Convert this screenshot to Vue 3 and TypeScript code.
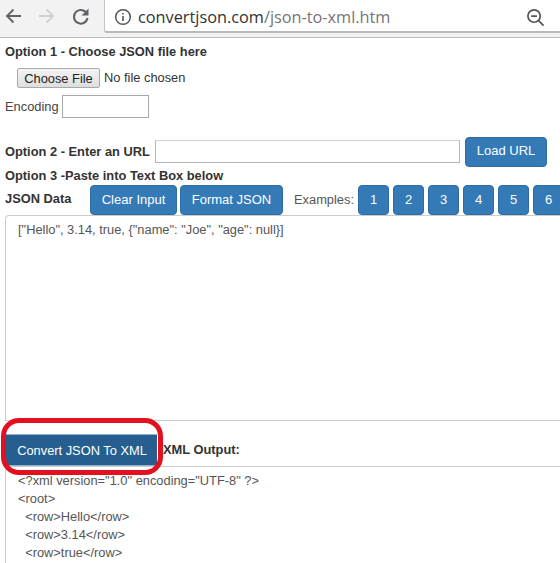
<script setup lang="ts">
const examples: number[] = [1, 2, 3, 4, 5, 6]
const jsonText = '["Hello", 3.14, true, {"name": "Joe", "age": null}]'
const xmlLines: string[] = [
  '<?xml version="1.0" encoding="UTF-8" ?>',
  '<root>',
  '  <row>Hello</row>',
  '  <row>3.14</row>',
  '  <row>true</row>',
]
</script>

<template>
  <div class="page">
    <header class="chrome">
      <div class="nav">
        <svg class="navicon" viewBox="0 0 20 20" width="20" height="20"><path d="M18 10H4M10.500 3.500L4 10l6.500 6.500" fill="none" stroke="#5f6368" stroke-width="1.800" /></svg>
        <svg class="navicon" viewBox="0 0 20 20" width="20" height="20"><path d="M2 10h14M9.500 3.500L16 10l-6.500 6.500" fill="none" stroke="#d0d0d0" stroke-width="1.800" /></svg>
        <svg class="navicon" viewBox="0 0 20 20" width="20" height="20"><path d="M16.200 8.500A6.800 6.800 0 1 0 16.500 12" fill="none" stroke="#5f6368" stroke-width="2" /><path d="M17.500 2.500v7h-7z" fill="#5f6368" /></svg>
      </div>
      <div class="omnibox">
        <svg class="info" viewBox="0 0 18 18" width="18" height="18"><circle cx="9" cy="9" r="7.300" fill="none" stroke="#555" stroke-width="1.500" /><path d="M9 8v5M9 5v1.600" stroke="#555" stroke-width="1.600" /></svg>
        <span class="url"><span class="host">convertjson.com</span>/json-to-xml.htm</span>
        <svg class="zoomout" viewBox="0 0 20 20" width="19" height="19"><circle cx="8.500" cy="8.500" r="6.500" fill="none" stroke="#555" stroke-width="1.800" /><path d="M5.500 8.500h6M13 13l5.500 5.500" stroke="#555" stroke-width="1.800" /></svg>
      </div>
    </header>

    <main class="content">
      <div class="opt1">Option 1 - Choose JSON file here</div>
      <div class="filerow">
        <button class="native">Choose File</button>
        <span class="nofile">No file chosen</span>
      </div>
      <div class="encrow">
        <label class="plain">Encoding</label>
        <input class="enc" type="text" />
      </div>
      <div class="urlrow">
        <span class="bold urllabel">Option 2 - Enter an URL</span>
        <input class="urlinput" type="text" />
        <button class="btn load">Load URL</button>
      </div>
      <div class="opt3">Option 3 -Paste into Text Box below</div>
      <div class="toolrow">
        <span class="bold jsonlabel">JSON Data</span>
        <button class="btn clear">Clear Input</button>
        <button class="btn format">Format JSON</button>
        <span class="exlabel">Examples:</span>
        <button v-for="n in examples" :key="n" class="btn num">{{ n }}</button>
      </div>
      <div class="textbox">{{ jsonText }}</div>
      <div class="convertrow">
        <button class="convert">Convert JSON To XML</button>
        <span class="bold outlabel">XML Output:</span>
        <span class="redmark"></span>
      </div>
      <pre class="output"><template v-for="line in xmlLines" :key="line">{{ line }}
</template></pre>
    </main>
  </div>
</template>

<style>
html, body { margin: 0; padding: 0; background: #fff; overflow: hidden; }
</style>

<style scoped>
.page {
  width: 560px;
  height: 563px;
  overflow: hidden;
  font-family: "Liberation Sans", Arial, sans-serif;
  font-size: 12.850px;
  color: #333;
  background: #fff;
}
.chrome {
  display: flex;
  height: 38px;
  box-sizing: border-box;
  background: #f2f2f2;
  border-bottom: 1px solid #bdbdbd;
  align-items: flex-start;
}
.nav {
  display: flex;
  width: 104px;
  padding: 6px 0 0 3px;
  box-sizing: border-box;
  gap: 14px;
}
.navicon { flex: none; }
.omnibox {
  flex: 1;
  display: flex;
  align-items: center;
  height: 33px;
  box-sizing: border-box;
  background: #fff;
  border-left: 1px solid #c4c4c4;
  border-bottom: 2px solid #b9b9b9;
  border-bottom-left-radius: 3px;
  padding: 3px 0 0 9px;
}
.info { flex: none; }
.url {
  margin-left: 6px;
  font-family: "Open Sans", sans-serif;
  font-size: 16.300px;
  color: #757575;
  white-space: nowrap;
}
.host { color: #333; }
.zoomout { margin-left: auto; margin-right: 15px; flex: none; }

.content { position: relative; height: 525px; }
.bold { font-weight: bold; white-space: nowrap; }
.opt1 { font-weight: bold; padding: 6px 0 0 5px; line-height: 16px; height: 24px; }
.filerow { display: flex; align-items: center; padding-left: 17px; height: 20px; }
.native {
  width: 83px;
  height: 20px;
  flex: none;
  padding: 0;
  font: 12.850px "Liberation Sans", Arial, sans-serif;
  color: #222;
  background: linear-gradient(#f4f4f4, #dedede);
  border: 1px solid #a9a9a9;
  border-radius: 2px;
}
.nofile { margin-left: 4px; color: #333; position: relative; top: -1px; }
.encrow { display: flex; align-items: center; padding: 7px 0 0 5px; height: 22px; }
.plain { color: #444; width: 54px; flex: none; }
.enc {
  margin-left: 3px;
  width: 87px;
  height: 23px;
  flex: none;
  box-sizing: border-box;
  border: 1px solid #a9a9a9;
  padding: 0;
}
.urlrow { display: flex; align-items: center; padding: 20px 0 0 5px; height: 29px; }
.urllabel { width: 150px; flex: none; }
.urlinput {
  width: 305px;
  height: 23px;
  flex: none;
  box-sizing: border-box;
  border: 1px solid #b5b5b5;
  border-top-color: #d0d0d0;
  padding: 0;
}
.btn {
  height: 30px;
  flex: none;
  box-sizing: border-box;
  padding: 0 0 2px;
  color: #fff;
  font: 13px "Liberation Sans", Arial, sans-serif;
  background: #337ab7;
  border: 1px solid #2e6da4;
  border-radius: 4px;
}
.load { width: 82px; margin-left: 5px; }
.opt3 { font-weight: bold; padding: 1px 0 0 5px; line-height: 18px; height: 18px; }
.toolrow { display: flex; align-items: center; padding-left: 5px; height: 30px; width: 600px; white-space: nowrap; }
.jsonlabel { width: 85px; flex: none; margin-bottom: 4px; }
.clear { width: 87px; }
.format { width: 103px; margin-left: 3px; }
.exlabel { margin-left: 11px; width: 64px; color: #555; flex: none; margin-bottom: 2px; }
.num { width: 31px; margin-right: 4px; }
.textbox {
  margin-left: 5px;
  height: 206px;
  box-sizing: border-box;
  border: 1px solid #ccc;
  border-right: 0;
  border-top-left-radius: 4px;
  padding: 5px 12px;
  line-height: 17px;
  color: #555;
}
.convertrow {
  position: relative;
  display: flex;
  align-items: center;
  margin-top: 13px;
  height: 32px;
  padding-left: 5px;
}
.convert {
  width: 152px;
  height: 32px;
  flex: none;
  padding: 0 0 0 2px;
  color: #fff;
  font: 12.850px "Liberation Sans", Arial, sans-serif;
  background: #265f8f;
  border: 0;
  border-top: 1px solid #8fb2d4;
  border-bottom: 1px solid #8fb2d4;
}
.outlabel { margin-left: 6px; margin-bottom: 2px; }
.redmark {
  position: absolute;
  left: 1px;
  top: -16px;
  width: 162px;
  height: 57px;
  box-sizing: border-box;
  border: 5px solid #e3101f;
  border-radius: 18px;
  pointer-events: none;
}
.output {
  margin: 0 0 0 5px;
  border-top: 1px solid #ccc;
  border-left: 1px solid #ccc;
  padding: 5px 0 0 12px;
  font: 12.850px/18px "Liberation Sans", Arial, sans-serif;
  color: #555;
  height: 100px;
  white-space: pre;
}
</style>
